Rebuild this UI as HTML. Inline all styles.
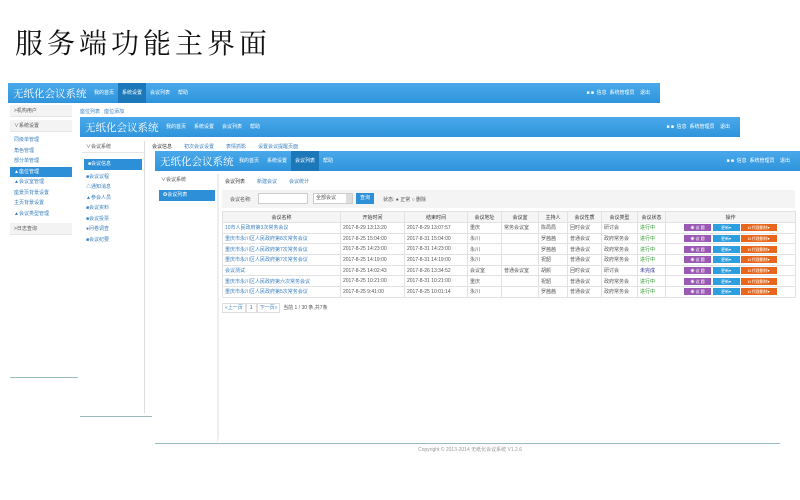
<!DOCTYPE html>
<html><head><meta charset="utf-8"><style>
*{margin:0;padding:0;box-sizing:border-box}
body{width:800px;height:500px;background:#fff;position:relative;overflow:hidden;font-family:"Liberation Sans","Noto Sans CJK SC",sans-serif;color:#555}
.a{position:absolute}
.title{left:15px;top:22px;font-size:28px;color:#111;font-family:"Liberation Serif","Noto Serif CJK SC",serif;letter-spacing:4px}
.hdr{position:absolute;height:20px;background:linear-gradient(#4aa9ea,#2f94dc);color:#fff}
.logo{position:absolute;left:5px;top:3px;font-size:10.5px;font-family:"Liberation Serif","Noto Serif CJK SC",serif;white-space:nowrap}
.nav{position:absolute;top:0;height:20px;font-size:5px;line-height:20px;white-space:nowrap}
.nav span{display:inline-block;padding:0 4px}
.nav .on{background:#1d78ba}
.rt{position:absolute;right:10px;top:0;font-size:5px;line-height:20px;white-space:nowrap}
.side{position:absolute;background:#fff;border-right:1px solid #ddd}
.si{font-size:5px;height:10.5px;line-height:10.5px;padding-left:4px;color:#3a7fc0;white-space:nowrap}
.sh{background:#f3f3f3;color:#555;border-bottom:1px solid #e5e5e5;height:12px;line-height:12px}
.sa{background:#2d8fd8;color:#fff;margin:2px 2px}
.tabs{font-size:5px;white-space:nowrap;color:#3a7fc0}
.tabs span{margin-right:12px}
.line{position:absolute;height:1px;background:#9bb;}
table{border-collapse:collapse;font-size:5px;position:absolute;left:222px;top:211px;width:574px}
td,th{border:1px solid #e2e2e2;height:10.7px;padding:0 2px;white-space:nowrap;overflow:hidden;text-align:left;font-weight:normal}
th{background:#f5f5f5;text-align:center;color:#333;height:11px}
td.l{color:#3a7fc0}
.g{color:#2a9a2a}.p{color:#339}
.b{display:inline-block;height:7px;color:#fff;font-size:4px;line-height:7px;text-align:center;vertical-align:middle}
</style></head><body>
<div class="a title">服务端功能主界面</div>

<!-- window 1 -->
<div class="a" style="left:8px;top:83px;width:652px;height:300px;background:#fff"></div>
<div class="hdr" style="left:8px;top:83px;width:652px">
 <div class="logo">无纸化会议系统</div>
 <div class="nav" style="left:82px"><span>我的首页</span><span class="on">系统设置</span><span>会议列表</span><span>帮助</span></div>
 <div class="rt">■ ■ &nbsp;信息 &nbsp;系统管理员 &nbsp;&nbsp; 退出</div>
</div>
<div class="side" style="left:10px;top:105px;width:62px;height:270px;border:none">
 <div class="si sh">&gt;机构用户</div>
 <div class="si sh" style="margin-top:3px">∨系统设置</div>
 <div class="si" style="margin-top:3px">同级单管理</div>
 <div class="si">角色管理</div>
 <div class="si">部分单管理</div>
 <div class="si sa" style="margin:0">▲座位管理</div>
 <div class="si">▲会议室管理</div>
 <div class="si">座景页背景设置</div>
 <div class="si">主页背景设置</div>
 <div class="si">▲会议类型管理</div>
 <div class="si sh" style="margin-top:4px">&gt;日志查询</div>
</div>
<div class="a tabs" style="left:80px;top:108px">座位列表 &nbsp; 座位添加</div>
<div class="line" style="left:10px;top:377px;width:68px"></div>

<!-- window 2 -->
<div class="a" style="left:80px;top:117px;width:660px;height:300px;background:#fff"></div>
<div class="hdr" style="left:80px;top:117px;width:660px">
 <div class="logo">无纸化会议系统</div>
 <div class="nav" style="left:82px"><span>我的首页</span><span>系统设置</span><span>会议列表</span><span>帮助</span></div>
 <div class="rt">■ ■ &nbsp;信息 &nbsp;系统管理员 &nbsp;&nbsp; 退出</div>
</div>
<div class="side" style="left:82px;top:141px;width:63px;height:272px">
 <div class="si sh" style="background:#fff">∨会议系统</div>
 <div class="si sa" style="margin-top:6px">■会议信息</div>
 <div class="si">■会议议程</div>
 <div class="si">△通知消息</div>
 <div class="si">▲参会人员</div>
 <div class="si">■会议资料</div>
 <div class="si">■会议投票</div>
 <div class="si">●问卷调查</div>
 <div class="si">■会议纪要</div>
</div>
<div class="a tabs" style="left:152px;top:143px"><span style="color:#333">会议信息</span><span>初次会议设置</span><span>表情抓影</span><span>设置会议提醒页面</span></div>
<div class="line" style="left:80px;top:416px;width:72px"></div>

<!-- window 3 -->
<div class="a" style="left:155px;top:151px;width:645px;height:292px;background:#fff"></div>
<div class="hdr" style="left:155px;top:151px;width:645px">
 <div class="logo">无纸化会议系统</div>
 <div class="nav" style="left:80px"><span>我的首页</span><span>系统设置</span><span class="on">会议列表</span><span>帮助</span></div>
 <div class="rt">■ ■ &nbsp;信息 &nbsp;系统管理员 &nbsp;&nbsp; 退出</div>
</div>
<div class="side" style="left:157px;top:174px;width:61px;height:268px;border-right:1px solid #eee">
 <div class="si sh" style="background:#fff;border:none">∨会议系统</div>
 <div class="si sa" style="margin-top:4px">✪会议列表</div>
</div>
<div class="a" style="left:218px;top:174px;width:1px;height:265px;background:#eee"></div>
<div class="a tabs" style="left:225px;top:178px"><span style="color:#333">会议列表</span><span>新建会议</span><span>会议统计</span></div>
<div class="a" style="left:222px;top:190px;width:573px;height:18px;background:#f4f4f4"></div>
<div class="a" style="left:230px;top:196px;font-size:5px;color:#555">会议名称:</div>
<div class="a" style="left:258px;top:193px;width:50px;height:11px;background:#fff;border:1px solid #ccc"></div>
<div class="a" style="left:313px;top:193px;width:40px;height:11px;background:#fff;border:1px solid #ccc;font-size:5px;line-height:9px;padding-left:2px">全部会议 <span style="float:right;background:#ddd;width:6px;height:9px"></span></div>
<div class="a" style="left:356px;top:193px;width:18px;height:11px;background:#2d8fd8;color:#fff;font-size:5px;line-height:11px;text-align:center">查询</div>
<div class="a" style="left:383px;top:196px;font-size:5px">状态: ● 正常 ○ 删除</div>
<table>
<tr><th style="width:118px">会议名称</th><th style="width:64px">开始时间</th><th style="width:63px">结束时间</th><th style="width:34px">会议地址</th><th style="width:37px">会议室</th><th style="width:29px">主持人</th><th style="width:34px">会议性质</th><th style="width:36px">会议类型</th><th style="width:28px">会议状态</th><th>操作</th></tr>
<tr><td class="l">10市人民政府第3次常务会议</td><td>2017-8-29 13:13:20</td><td>2017-8-29 13:07:57</td><td>重庆</td><td>常务会议室</td><td>陈局局</td><td>回时会议</td><td>研讨会</td><td class="g">进行中</td><td>B</td></tr>
<tr><td class="l">重庆市永川区人民政府第8次常务会议</td><td>2017-8-25 15:04:00</td><td>2017-8-31 15:04:00</td><td>永川</td><td></td><td>罗茜茜</td><td>普通会议</td><td>政府常务会</td><td class="g">进行中</td><td>B</td></tr>
<tr><td class="l">重庆市永川区人民政府第7次常务会议</td><td>2017-8-25 14:23:00</td><td>2017-8-31 14:23:00</td><td>永川</td><td></td><td>罗茜茜</td><td>普通会议</td><td>政府常务会</td><td class="g">进行中</td><td>B</td></tr>
<tr><td class="l">重庆市永川区人民政府第7次常务会议</td><td>2017-8-25 14:19:00</td><td>2017-8-31 14:19:00</td><td>永川</td><td></td><td>祝韶</td><td>普通会议</td><td>政府常务会</td><td class="g">进行中</td><td>B</td></tr>
<tr><td class="l">会议测试</td><td>2017-8-25 14:02:43</td><td>2017-8-26 13:34:52</td><td>会议室</td><td>普通会议室</td><td>胡颜</td><td>回时会议</td><td>研讨会</td><td class="p">未完成</td><td>B</td></tr>
<tr><td class="l">重庆市永川区人民政府第六次常务会议</td><td>2017-8-25 10:21:00</td><td>2017-8-31 10:21:00</td><td>重庆</td><td></td><td>祝韶</td><td>普通会议</td><td>政府常务会</td><td class="g">进行中</td><td>B</td></tr>
<tr><td class="l">重庆市永川区人民政府第5次常务会议</td><td>2017-8-25 9:41:00</td><td>2017-8-25 10:01:14</td><td>永川</td><td></td><td>罗茜茜</td><td>普通会议</td><td>政府常务会</td><td class="g">进行中</td><td>B</td></tr>
</table>
<div class="a" style="left:222px;top:304px;font-size:5px;white-space:nowrap"><span style="border:1px solid #ddd;padding:1px 2px;color:#3a7fc0">«上一页</span><span style="border:1px solid #ddd;padding:1px 3px">1</span><span style="border:1px solid #ddd;padding:1px 2px;color:#3a7fc0">下一页»</span> &nbsp;当前 1 / 30 条,共7条</div>
<div class="line" style="left:155px;top:443px;width:625px"></div>
<div class="a" style="left:418px;top:446px;font-size:5px;color:#999;white-space:nowrap">Copyright © 2013-2014 无纸化会议系统 V1.2.6</div>
<script>
document.querySelectorAll('td').forEach(function(t){if(t.textContent==='B'){t.style.textAlign='center';t.innerHTML='<span class="b" style="width:27px;background:#9b59b6">◉ 议 题</span> <span class="b" style="width:27px;background:#2d9ee0">更新▾</span> <span class="b" style="width:36px;background:#e8671c">◘ 代理删除▾</span>';}});
</script>
</body></html>
